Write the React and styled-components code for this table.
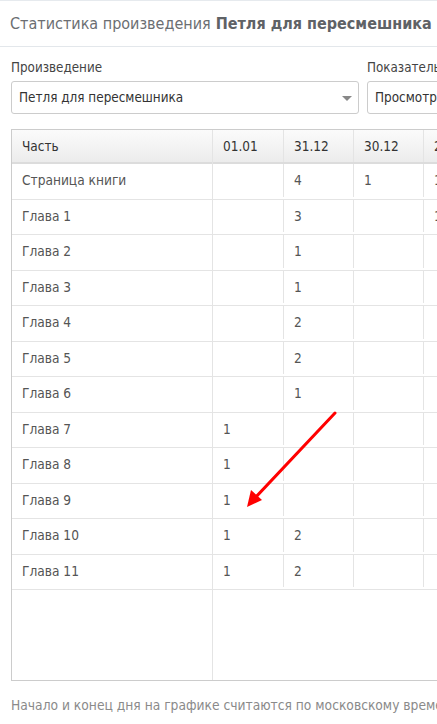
import styled, { createGlobalStyle } from 'styled-components'

const GlobalStyle = createGlobalStyle`
  html, body {
    margin: 0;
    padding: 0;
    overflow: hidden;
    background: #fff;
  }
  body {
    font-family: "DejaVu Sans Condensed", "DejaVu Sans", Verdana, sans-serif;
    font-stretch: condensed;
    color: #333;
  }
`

const Page = styled.div`
  position: relative;
  width: 437px;
  height: 724px;
  overflow: hidden;
  border-top: 1px solid #e6eaee;
  box-sizing: border-box;
`

const TitleBar = styled.h1`
  margin: 0;
  height: 45px;
  padding: 0 10px;
  display: flex;
  align-items: center;
  white-space: nowrap;
  font-size: 16px;
  font-weight: normal;
  color: #6b6e72;
  border-bottom: 1px solid #e3e7eb;

  b {
    font-weight: bold;
    color: #5f6266;
    margin-left: 5px;
  }
`

const Filters = styled.div`
  display: flex;
  gap: 8px;
  padding: 13px 0 0 11px;
  width: 700px;
`

const Field = styled.div`
  display: flex;
  flex-direction: column;
  gap: 5px;
  width: ${({ $w }) => $w}px;
  flex: none;
`

const Label = styled.label`
  font-size: 13.3px;
  color: #444;
  line-height: 16px;
`

const Select = styled.div`
  position: relative;
  height: 33px;
  box-sizing: border-box;
  border: 1px solid #ccc;
  border-radius: 3px;
  display: flex;
  align-items: center;
  padding: 0 7px;
  font-size: 13.4px;
  color: #333;
  white-space: nowrap;

  &::after {
    content: '';
    position: absolute;
    right: 6px;
    top: 14px;
    border-left: 5px solid transparent;
    border-right: 5px solid transparent;
    border-top: 5px solid #888;
  }
`

const TablePanel = styled.div`
  margin: 15px 0 0 11px;
  height: 552px;
  width: 800px;
  box-sizing: border-box;
  border: 1px solid #ccc;
  display: flex;
  font-size: 13.6px;
  color: #555;
`

const FrozenCol = styled.div`
  width: 200px;
  flex: none;
  border-right: 1px solid #e4e4e4;
`

const DataCols = styled.div`
  display: flex;
  flex-direction: column;
`

const HeadRow = styled.div`
  display: flex;
  height: 32px;
  border-bottom: 2px solid #dcdcdc;
  background: linear-gradient(#fbfbfb, #ececec);
  color: #333;
  font-size: 13.5px;
`

const Row = styled.div`
  display: flex;
  height: 35.5px;
  box-sizing: border-box;
  padding-bottom: 2px;
  border-bottom: 1px solid #e4e4e4;
`

const Cell = styled.div`
  width: ${({ $w }) => $w}px;
  flex: none;
  box-sizing: border-box;
  padding-left: ${({ $pad }) => $pad ?? 10}px;
  display: flex;
  align-items: center;
  border-right: ${({ $last }) => ($last ? 'none' : '1px solid #e4e4e4')};
  white-space: nowrap;
`

const Footer = styled.p`
  margin: 16px 0 0 11px;
  font-size: 13.7px;
  color: #8a8a8a;
  white-space: nowrap;
`

const Arrow = styled.svg`
  position: absolute;
  left: 0;
  top: 0;
  pointer-events: none;
`

const dates = ['01.01', '31.12', '30.12', '29.12', '28.12']
const widths = [71, 70, 70, 70, 70]

const rows = [
  { name: 'Страница книги', v: ['', '4', '1', '1', ''] },
  { name: 'Глава 1', v: ['', '3', '', '1', ''] },
  { name: 'Глава 2', v: ['', '1', '', '', ''] },
  { name: 'Глава 3', v: ['', '1', '', '', ''] },
  { name: 'Глава 4', v: ['', '2', '', '', ''] },
  { name: 'Глава 5', v: ['', '2', '', '', ''] },
  { name: 'Глава 6', v: ['', '1', '', '', ''] },
  { name: 'Глава 7', v: ['1', '', '', '', ''] },
  { name: 'Глава 8', v: ['1', '', '', '', ''] },
  { name: 'Глава 9', v: ['1', '', '', '', ''] },
  { name: 'Глава 10', v: ['1', '2', '', '', ''] },
  { name: 'Глава 11', v: ['1', '2', '', '', ''] },
]

export default function App() {
  return (
    <Page>
      <GlobalStyle />
      <TitleBar>
        Статистика произведения<b>Петля для пересмешника</b>
      </TitleBar>

      <Filters>
        <Field $w={348}>
          <Label>Произведение</Label>
          <Select>Петля для пересмешника</Select>
        </Field>
        <Field $w={200}>
          <Label>Показатель</Label>
          <Select>Просмотры</Select>
        </Field>
      </Filters>

      <TablePanel>
        <FrozenCol>
          <HeadRow>
            <Cell $w={200} $pad={10} $last>Часть</Cell>
          </HeadRow>
          {rows.map(r => (
            <Row key={r.name}>
              <Cell $w={200} $pad={10} $last>{r.name}</Cell>
            </Row>
          ))}
        </FrozenCol>
        <DataCols>
          <HeadRow>
            {dates.map((d, i) => (
              <Cell key={d} $w={widths[i]}>{d}</Cell>
            ))}
          </HeadRow>
          {rows.map(r => (
            <Row key={r.name}>
              {r.v.map((val, i) => (
                <Cell key={i} $w={widths[i]}>{val}</Cell>
              ))}
            </Row>
          ))}
        </DataCols>
      </TablePanel>

      <Footer>Начало и конец дня на графике считаются по московскому времени</Footer>

      <Arrow width="437" height="724" viewBox="0 0 437 724">
        <line x1="335" y1="412" x2="255" y2="497" stroke="#f00" strokeWidth="3" strokeLinecap="round" />
        <polygon points="247,506 251,489 262,499" fill="#f00" />
      </Arrow>
    </Page>
  )
}
